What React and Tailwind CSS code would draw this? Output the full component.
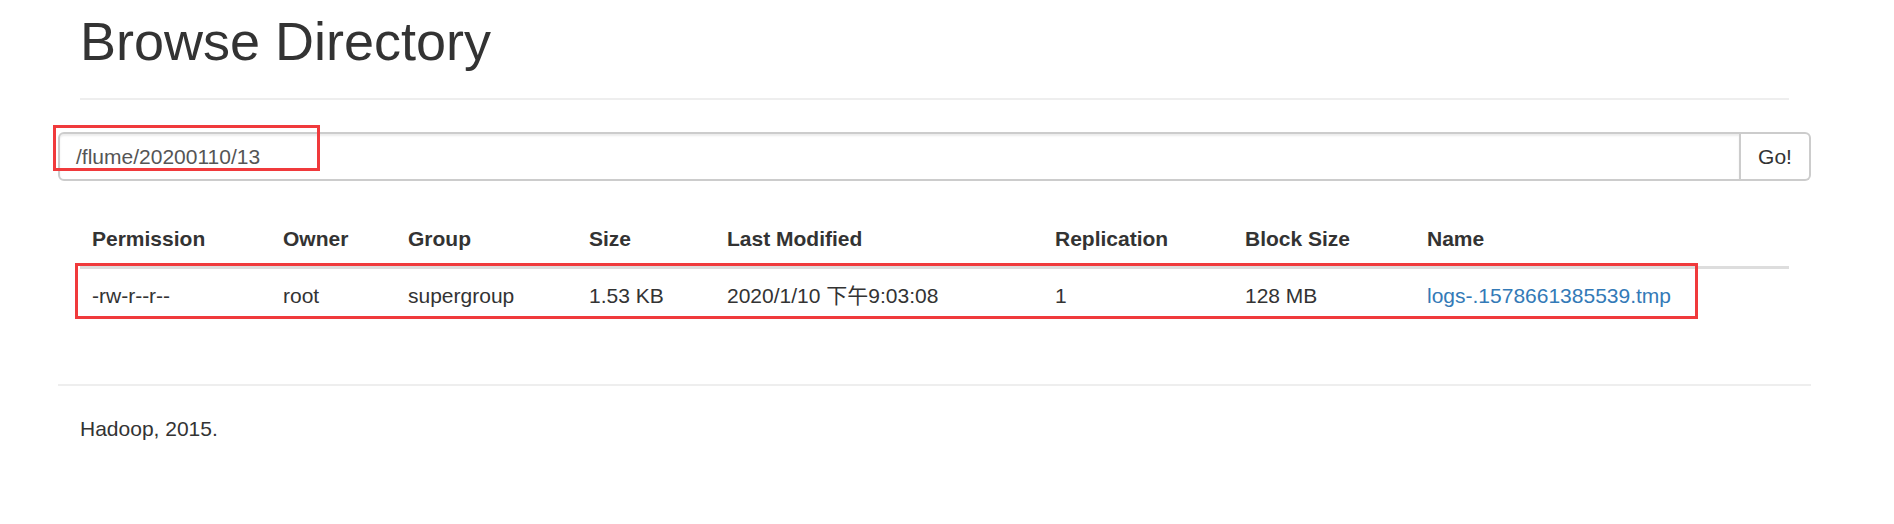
import React from "react";

const columns = [
  { label: "Permission", w: "w-[191px]" },
  { label: "Owner", w: "w-[125px]" },
  { label: "Group", w: "w-[181px]" },
  { label: "Size", w: "w-[138px]" },
  { label: "Last Modified", w: "w-[328px]" },
  { label: "Replication", w: "w-[190px]" },
  { label: "Block Size", w: "w-[182px]" },
  { label: "Name", w: "w-[374px]" },
];

const files = [
  {
    permission: "-rw-r--r--",
    owner: "root",
    group: "supergroup",
    size: "1.53 KB",
    modified: "2020/1/10 下午9:03:08",
    replication: "1",
    blockSize: "128 MB",
    name: "logs-.1578661385539.tmp",
  },
];

export default function App() {
  return (
    <div className="relative min-h-[524px] bg-white text-[21px] leading-[30px] text-[#333] font-['Liberation_Sans','Noto_Sans_CJK_SC',sans-serif]">
      <div className="ml-[58px] w-[1753px]">
        <div className="px-[22px]">
          <h1 className="pt-[12px] pb-[27px] text-[54px] leading-[59px] font-normal border-b-2 border-[#eee]">
            Browse Directory
          </h1>
        </div>

        {/* path form */}
        <div className="mt-[32px] flex h-[49px]">
          <div className="flex-1 flex items-center pl-[16px] border-2 border-[#cccccc] rounded-l-[6px] text-[#555] shadow-[inset_0_2px_2px_rgba(0,0,0,0.075)]">
            /flume/20200110/13
          </div>
          <button className="w-[70px] flex items-center justify-center border-2 border-l-0 border-[#cccccc] rounded-r-[6px] bg-white text-[#333]">
            Go!
          </button>
        </div>

        <div className="px-[22px] mt-[31px]">
          <table className="w-full table-fixed border-collapse text-left">
            <thead>
              <tr className="border-b-[3px] border-[#ddd]">
                {columns.map((c) => (
                  <th key={c.label} className={`${c.w} px-[12px] py-[12px] font-bold`}>
                    {c.label}
                  </th>
                ))}
              </tr>
            </thead>
            <tbody>
              {files.map((f) => (
                <tr key={f.name}>
                  <td className="px-[12px] py-[12px]">{f.permission}</td>
                  <td className="px-[12px] py-[12px]">{f.owner}</td>
                  <td className="px-[12px] py-[12px]">{f.group}</td>
                  <td className="px-[12px] py-[12px]">{f.size}</td>
                  <td className="px-[12px] py-[12px] whitespace-nowrap">{f.modified}</td>
                  <td className="px-[12px] py-[12px]">{f.replication}</td>
                  <td className="px-[12px] py-[12px]">{f.blockSize}</td>
                  <td className="px-[12px] py-[12px]">
                    <a href="#" className="text-[#337ab7]">{f.name}</a>
                  </td>
                </tr>
              ))}
            </tbody>
          </table>
        </div>

        <div className="mt-[61px] border-t-2 border-[#eee] pt-[28px] px-[22px]">
          <p>Hadoop, 2015.</p>
        </div>
      </div>

      {/* red annotation boxes */}
      <div className="absolute left-[53px] top-[125px] w-[267px] h-[46px] border-[3px] border-[#f03a3c]" />
      <div className="absolute left-[75px] top-[263px] w-[1623px] h-[56px] border-[3px] border-[#f03a3c]" />
    </div>
  );
}
